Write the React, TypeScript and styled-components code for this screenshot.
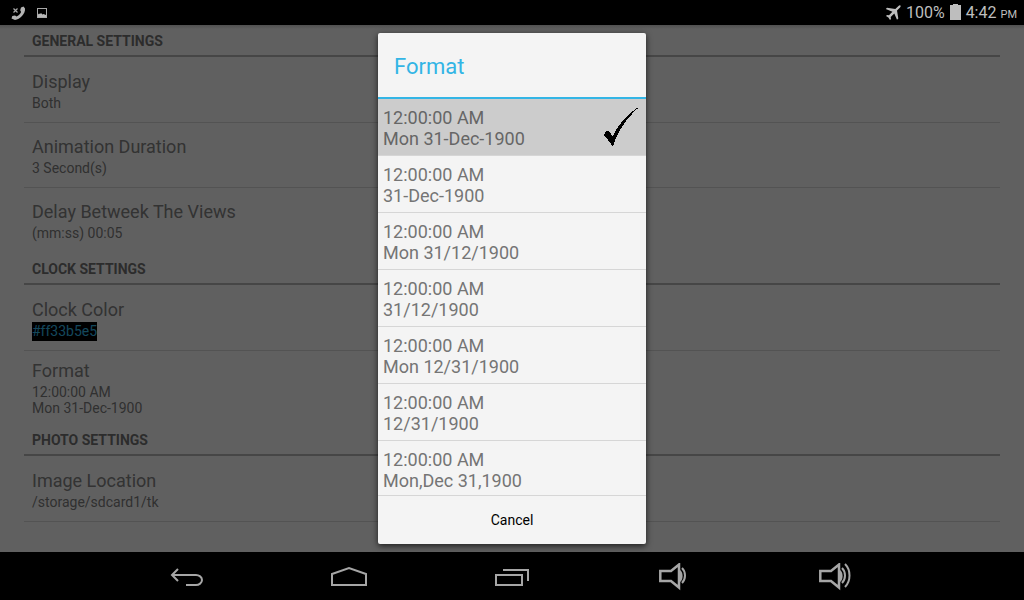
import React, { useState } from "react";
import styled, { createGlobalStyle } from "styled-components";

const GlobalStyle = createGlobalStyle`
  *, *::before, *::after { box-sizing: border-box; }
  body {
    margin: 0;
    background: #000;
    font-family: Roboto, "Liberation Sans", sans-serif;
  }
  button { font-family: inherit; }
`;

const Device = styled.div`
  display: flex;
  flex-direction: column;
  height: 100vh;
  overflow: hidden;
`;

const StatusBar = styled.header`
  display: flex;
  flex: none;
  align-items: center;
  justify-content: space-between;
  height: 25px;
  padding: 0 7px 0 10px;
  background: #000;
  color: #bebebe;
  font-size: 16px;
  line-height: 25px;
`;

const StatusGroup = styled.div<{ $gap: number }>`
  display: flex;
  align-items: center;
  gap: ${(p) => p.$gap}px;
  svg { display: block; }
`;

const Clock = styled.span`
  small {
    font-size: 11px;
    line-height: 1;
  }
`;

const Screen = styled.main`
  position: relative;
  flex: 1;
  min-height: 0;
  background: #f3f3f3;
`;

const Settings = styled.div`
  height: 100%;
  padding: 0 24px;
  overflow: hidden;
`;

const CategoryTitle = styled.h2`
  height: 32px;
  margin: 0 0 1px;
  padding: 0 8px;
  border-bottom: 2px solid #b0b0b0;
  color: #707070;
  font-size: 14px;
  font-weight: 700;
  line-height: 32px;
`;

const Preference = styled.div<{ $tall?: boolean; $divider: boolean }>`
  padding: ${(p) => (p.$tall ? "8px 8px 7px" : "12px 8px 9px")};
  border-bottom: 1px solid ${(p) => (p.$divider ? "#d2d2d2" : "transparent")};
`;

const PreferenceTitle = styled.div`
  color: #808080;
  font-size: 18px;
  line-height: 24px;
`;

const Summary = styled.div<{ $tall?: boolean }>`
  padding-top: ${(p) => (p.$tall ? 1 : 0)}px;
  color: #7a7a7a;
  font-size: 14px;
  line-height: ${(p) => (p.$tall ? 16 : 19)}px;
  white-space: pre-line;
`;

const ColorValue = styled.span`
  display: inline-block;
  background: #000;
  color: #33b5e5;
`;

const Scrim = styled.div`
  position: absolute;
  inset: 0;
  display: flex;
  align-items: center;
  justify-content: center;
  padding: 8px;
  background: linear-gradient(rgba(0, 0, 0, 0.16), transparent 4px), rgba(0, 0, 0, 0.605);
`;

const Dialog = styled.section`
  display: flex;
  flex-direction: column;
  width: 268px;
  max-height: 100%;
  border-radius: 2px;
  background: #f4f4f4;
  box-shadow: 0 2px 6px rgba(0, 0, 0, 0.7);
  overflow: hidden;
`;

const DialogTitle = styled.h1`
  flex: none;
  height: 66px;
  margin: 0;
  padding: 2px 16px 0;
  border-bottom: 2px solid #33b5e5;
  color: #33b5e5;
  font-size: 22px;
  font-weight: 400;
  line-height: 64px;
`;

const Options = styled.div`
  flex: 1;
  min-height: 0;
  overflow-y: auto;
  scrollbar-width: none;
`;

const Option = styled.label<{ $selected: boolean }>`
  display: flex;
  align-items: center;
  justify-content: space-between;
  height: 57px;
  padding: 2px 8px 0 5px;
  border-bottom: 1px solid #d6d6d6;
  background: ${(p) => (p.$selected ? "#cccccc" : "transparent")};
  color: ${(p) => (p.$selected ? "#666" : "#757575")};
  font-size: 18px;
  line-height: 21px;
  white-space: pre-line;
`;

const Radio = styled.input`
  appearance: none;
  width: 0;
  height: 0;
  margin: 0;
`;

const OptionText = styled.span`
  flex: 1;
`;

const CancelButton = styled.button`
  flex: none;
  height: 49px;
  padding: 0;
  border: 0;
  border-top: 1px solid #d6d6d6;
  background: transparent;
  color: #000;
  font-size: 14px;
`;

const NavBar = styled.nav`
  display: flex;
  flex: none;
  justify-content: center;
  height: 48px;
  background: #000;
`;

const NavButton = styled.button`
  display: flex;
  flex: 0 1 162px;
  align-items: center;
  justify-content: center;
  padding: 2px 0 0;
  border: 0;
  background: transparent;
  color: #a6a6a6;
`;

const categories = [
  {
    title: "GENERAL SETTINGS",
    items: [
      { title: "Display", summary: "Both" },
      { title: "Animation Duration", summary: "3 Second(s)" },
      { title: "Delay Betweek The Views", summary: "(mm:ss) 00:05" },
    ],
  },
  {
    title: "CLOCK SETTINGS",
    items: [
      { title: "Clock Color", summary: "#ff33b5e5", color: true },
      { title: "Format", summary: "12:00:00 AM\nMon 31-Dec-1900", tall: true },
    ],
  },
  {
    title: "PHOTO SETTINGS",
    items: [{ title: "Image Location", summary: "/storage/sdcard1/tk", last: true }],
  },
] as {
  title: string;
  items: { title: string; summary: string; color?: boolean; tall?: boolean; last?: boolean }[];
}[];

const formats = [
  "Mon 31-Dec-1900",
  "31-Dec-1900",
  "Mon 31/12/1900",
  "31/12/1900",
  "Mon 12/31/1900",
  "12/31/1900",
  "Mon,Dec 31,1900",
];

const MissedCallIcon = () => (
  <svg width="16" height="16" viewBox="0 0 16 16" aria-hidden="true">
    <path d="M3.5 3.5l4 4M7.5 3.5l-4 4" stroke="#a8a8a8" strokeWidth="1.2" />
    <path
      d="M11 2.500l2.500-1 1.500 2c.3 2.500-1 5.500-3 7.500-2 2.200-4.500 3.700-7 4L1.500 13.500l.8-2.500 2.700-.5 1.500 1c2-.8 3.700-2.500 4.600-4.500L10.200 5.200z"
      fill="#b4b4b4"
    />
  </svg>
);

const PictureIcon = () => (
  <svg width="12" height="12" viewBox="0 0 12 12" aria-hidden="true">
    <rect x="1.500" y="1.500" width="9" height="9" fill="none" stroke="#a8a8a8" />
    <path d="M2 10V7.500l1-1 1 .5 1-1 1.500 1.500 1-.5 2.500 1V10z" fill="#b8b8b8" />
  </svg>
);

const PlaneIcon = () => (
  <svg width="16" height="16" viewBox="0 0 16 16" aria-hidden="true">
    <path
      d="M15.400.6c.5.500.2 1.300-.4 1.900L12 5.500l1.300 8-1.300 1.200L9.300 8.600 5.700 12l.3 2-1 1-1.600-2.500L1 11l1-1 2 .2 3.400-3.500L.8 4 2 2.700l8.300 1.200L13.500 1c.6-.6 1.400-.9 1.900-.4z"
      fill="#bebebe"
    />
  </svg>
);

const BatteryIcon = () => (
  <svg width="11" height="17" viewBox="0 0 11 17" aria-hidden="true">
    <path d="M3 0h5v1h3v15H0V1h3z" fill="#bebebe" />
  </svg>
);

const CheckIcon = () => (
  <svg width="34" height="40" viewBox="0 0 34 40" aria-hidden="true">
    <path
      d="M33.500 0.500C27 6.500 21 13.500 17 20.500c-3 5-5.500 9.500-8 18C6.500 34.500 3 31 0 27.500c0-2 2-4.500 4.500-5 2 1 2.500 3.500 4 6C14 16.500 23.500 6.500 33 0z"
      fill="#000"
      shapeRendering="crispEdges"
    />
  </svg>
);

const NavIcon = ({
  width = 38,
  stroke = 2,
  children,
}: {
  width?: number;
  stroke?: number;
  children: React.ReactNode;
}) => (
  <svg
    width={width}
    height="28"
    viewBox={`0 0 ${width} 28`}
    fill="none"
    stroke="currentColor"
    strokeWidth={stroke}
    aria-hidden="true"
  >
    {children}
  </svg>
);

const Speaker = () => (
  <>
    <path d="M2.300 8H13l8-6.500v23L13 18H2.300z" />
    <path d="M22 7c3.500 2 3.500 10 0 12z" fill="currentColor" stroke="none" />
  </>
);

export default function App() {
  const [selected, setSelected] = useState(0);
  const [open, setOpen] = useState(true);

  return (
    <Device>
      <GlobalStyle />
      <StatusBar>
        <StatusGroup $gap={10}>
          <MissedCallIcon />
          <PictureIcon />
        </StatusGroup>
        <StatusGroup $gap={5}>
          <PlaneIcon />
          <span>100%</span>
          <BatteryIcon />
          <Clock>
            4:42 <small>PM</small>
          </Clock>
        </StatusGroup>
      </StatusBar>

      <Screen>
        <Settings>
          {categories.map((category) => (
            <section key={category.title}>
              <CategoryTitle>{category.title}</CategoryTitle>
              {category.items.map((item, i) => (
                <Preference
                  key={item.title}
                  $tall={item.tall}
                  $divider={item.last || i < category.items.length - 1}
                >
                  <PreferenceTitle>{item.title}</PreferenceTitle>
                  <Summary $tall={item.tall}>
                    {item.color ? <ColorValue>{item.summary}</ColorValue> : item.summary}
                  </Summary>
                </Preference>
              ))}
            </section>
          ))}
        </Settings>

        {open && (
          <Scrim>
            <Dialog role="dialog" aria-labelledby="format-title">
              <DialogTitle id="format-title">Format</DialogTitle>
              <Options role="radiogroup" aria-labelledby="format-title">
                {formats.map((format, i) => (
                  <Option key={format} $selected={i === selected}>
                    <Radio
                      type="radio"
                      name="format"
                      checked={i === selected}
                      onChange={() => setSelected(i)}
                    />
                    <OptionText>{`12:00:00 AM\n${format}`}</OptionText>
                    {i === selected && <CheckIcon />}
                  </Option>
                ))}
              </Options>
              <CancelButton type="button" onClick={() => setOpen(false)}>
                Cancel
              </CancelButton>
            </Dialog>
          </Scrim>
        )}
      </Screen>

      <NavBar>
        <NavButton type="button" aria-label="Back">
          <NavIcon>
            <path d="M9 6l-6 6 6 6M3 12h24c3 0 6 2 6 5s-3 5-6 5H17" />
          </NavIcon>
        </NavButton>
        <NavButton type="button" aria-label="Home">
          <NavIcon>
            <path d="M1 22V11l17-6 17 6v11z" />
          </NavIcon>
        </NavButton>
        <NavButton type="button" aria-label="Recent apps">
          <NavIcon>
            <path d="M3 12h26v10H3zM10 7h25v11" />
          </NavIcon>
        </NavButton>
        <NavButton type="button" aria-label="Volume down">
          <NavIcon width={32} stroke={2.5}>
            <Speaker />
            <path d="M24 5c4 4 4 11 0 15" strokeWidth="2" />
          </NavIcon>
        </NavButton>
        <NavButton type="button" aria-label="Volume up">
          <NavIcon width={36} stroke={2.5}>
            <Speaker />
            <path d="M24 5c4 4 4 11 0 15M27 1c6 6 6 17 0 23" strokeWidth="2" />
          </NavIcon>
        </NavButton>
      </NavBar>
    </Device>
  );
}
